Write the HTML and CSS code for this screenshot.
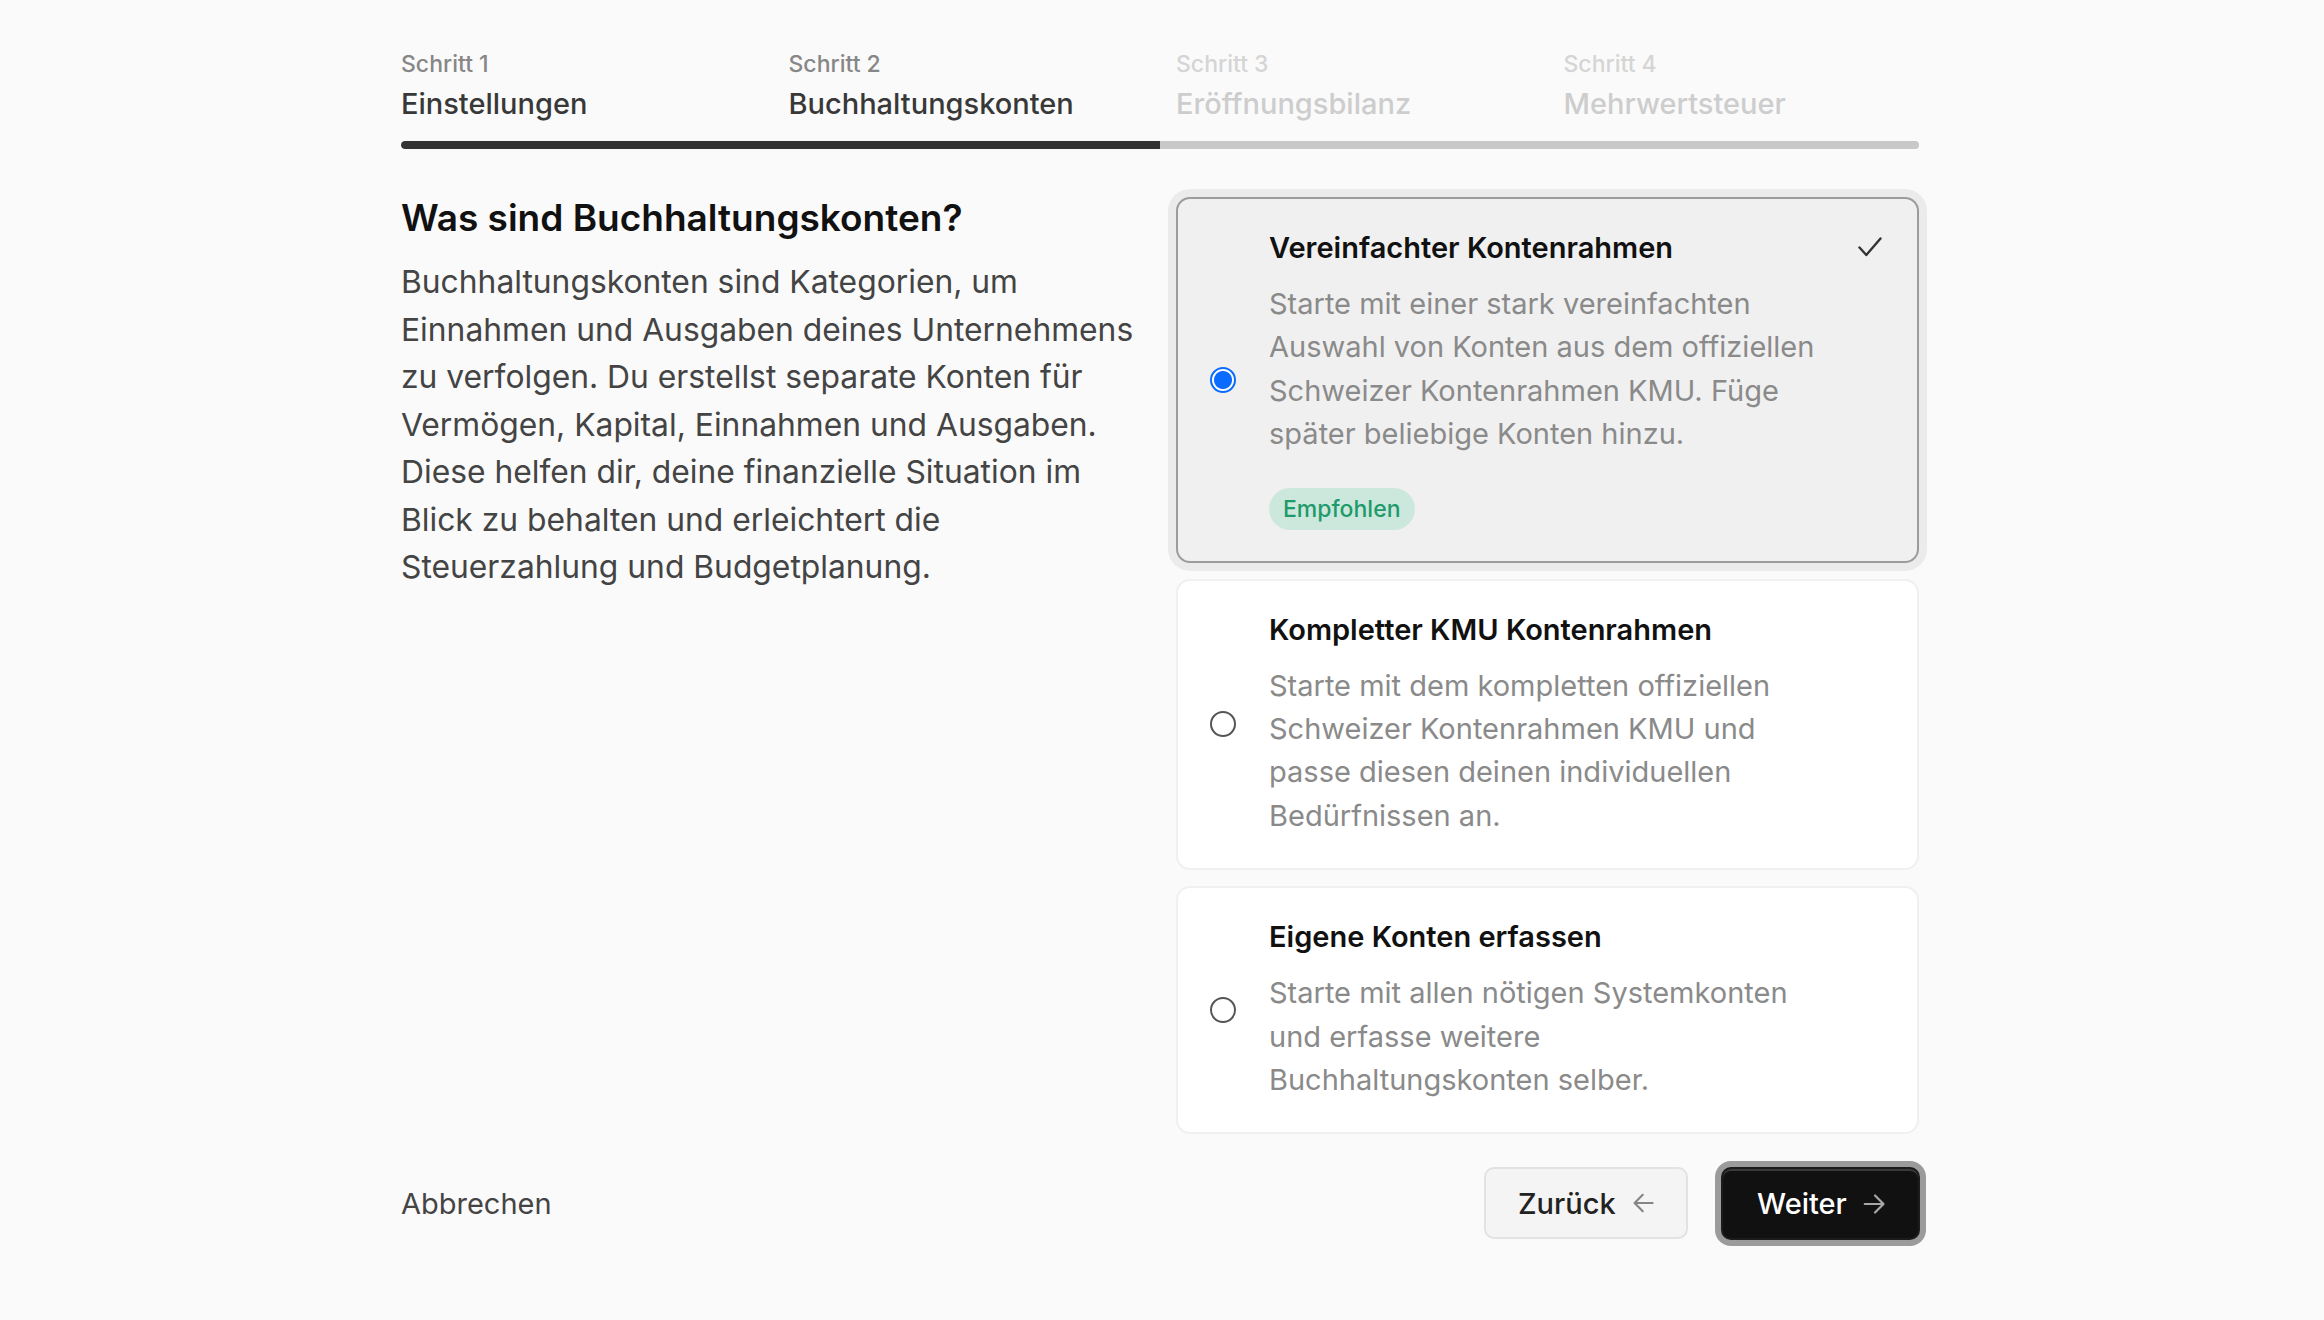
FILE: index.html
```html
<!DOCTYPE html>
<html lang="de">
<head>
<meta charset="utf-8">
<title>Buchhaltungskonten</title>
<link rel="stylesheet" href="styles.css">
</head>
<body>
<div class="page">
  <nav class="steps">
    <div class="step-list">
      <div class="step active"><span class="step-num">Schritt 1</span><span class="step-name">Einstellungen</span></div>
      <div class="step active"><span class="step-num">Schritt 2</span><span class="step-name">Buchhaltungskonten</span></div>
      <div class="step"><span class="step-num">Schritt 3</span><span class="step-name">Eröffnungsbilanz</span></div>
      <div class="step"><span class="step-num">Schritt 4</span><span class="step-name">Mehrwertsteuer</span></div>
    </div>
    <div class="progress"><div class="progress-fill" style="width:50%"></div></div>
  </nav>

  <main class="content">
    <section class="intro">
      <h1>Was sind Buchhaltungskonten?</h1>
      <p>Buchhaltungskonten sind Kategorien, um Einnahmen und Ausgaben deines Unternehmens zu verfolgen. Du erstellst separate Konten für Vermögen, Kapital, Einnahmen und Ausgaben. Diese helfen dir, deine finanzielle Situation im Blick zu behalten und erleichtert die Steuerzahlung und Budgetplanung.</p>
    </section>

    <div class="options">
      <div class="option selected">
        <span class="radio checked"></span>
        <div class="option-body">
          <h2>Vereinfachter Kontenrahmen</h2>
          <p>Starte mit einer stark vereinfachten Auswahl von Konten aus dem offiziellen Schweizer Kontenrahmen KMU. Füge später beliebige Konten hinzu.</p>
          <span class="badge">Empfohlen</span>
        </div>
        <svg class="check" width="24" height="20" viewBox="0 0 24 20" aria-hidden="true"><path d="M1.5 10.5 L8.3 18 L22.5 1.5" fill="none" stroke="#333" stroke-width="2.4" stroke-linecap="round" stroke-linejoin="round"/></svg>
      </div>

      <div class="option">
        <span class="radio"></span>
        <div class="option-body">
          <h2>Kompletter KMU Kontenrahmen</h2>
          <p>Starte mit dem kompletten offiziellen Schweizer Kontenrahmen KMU und passe diesen deinen individuellen Bedürfnissen an.</p>
        </div>
      </div>

      <div class="option">
        <span class="radio"></span>
        <div class="option-body">
          <h2>Eigene Konten erfassen</h2>
          <p>Starte mit allen nötigen Systemkonten und erfasse weitere Buchhaltungskonten selber.</p>
        </div>
      </div>
    </div>
  </main>

  <footer class="actions">
    <a class="cancel">Abbrechen</a>
    <div class="buttons">
      <button class="btn btn-secondary">Zurück
        <svg width="26" height="26" viewBox="0 0 26 26" aria-hidden="true"><path d="M24 13 H3 M12.5 3.5 L3 13 L12.5 22.5" fill="none" stroke="#858585" stroke-width="2.5" stroke-linecap="round" stroke-linejoin="round"/></svg>
      </button>
      <button class="btn btn-primary">Weiter
        <svg width="26" height="26" viewBox="0 0 26 26" aria-hidden="true"><path d="M2 13 H23 M13.5 3.5 L23 13 L13.5 22.5" fill="none" stroke="#a8a8a8" stroke-width="2.5" stroke-linecap="round" stroke-linejoin="round"/></svg>
      </button>
    </div>
  </footer>
</div>
</body>
</html>
```

FILE: styles.css
```css
* { box-sizing: border-box; }

html, body {
  margin: 0;
  padding: 0;
  background: #fafafa;
}

body {
  font-family: "Inter", "Noto Sans", "Liberation Sans", sans-serif;
  color: #222;
}

.page {
  width: 1518px;
  margin-left: 401px;
  padding-top: 49px;
  padding-bottom: 40px;
}

/* Steps */
.step-list {
  display: grid;
  grid-template-columns: repeat(4, 1fr);
  column-gap: 32px;
}

.step {
  display: flex;
  flex-direction: column;
}

.step-num {
  font-size: 23px;
  line-height: 30px;
  font-weight: 500;
  color: #d5d5d5;
  margin-bottom: 7px;
}

.step-name {
  font-size: 29px;
  line-height: 36px;
  font-weight: 500;
  color: #cdcdcd;
}

.step.active .step-num { color: #878787; }
.step.active .step-name { color: #383838; }

.progress {
  margin-top: 19px;
  height: 8px;
  border-radius: 4px;
  background: #c8c8c8;
  overflow: hidden;
}

.progress-fill {
  height: 100%;
  background: #333333;
  border-radius: 4px 0 0 4px;
}

/* Content */
.content {
  margin-top: 48px;
  display: grid;
  grid-template-columns: 1fr 1fr;
  column-gap: 32px;
  align-items: start;
}

.intro h1 {
  margin: 0;
  font-size: 37px;
  line-height: 42px;
  font-weight: 600;
  color: #111;
}

.intro p {
  margin: 19px 0 0;
  font-size: 31.8px;
  line-height: 47.5px;
  color: #444;
}

.options {
  display: flex;
  flex-direction: column;
  gap: 16px;
}

.option {
  display: grid;
  grid-template-columns: 26px 1fr 24px;
  column-gap: 33px;
  align-items: start;
  padding: 31px 35px 31px 32px;
  background: #ffffff;
  border: 2px solid #f0f0f0;
  border-radius: 14px;
}

.option.selected {
  background: #f0f0f0;
  border-color: #9c9c9c;
  box-shadow: 0 0 0 8px #ebebeb;
}

.radio {
  align-self: center;
  width: 26px;
  height: 26px;
  border-radius: 50%;
  border: 2px solid #555;
  background: #fff;
}

.radio.checked {
  border-color: #0a6cff;
  background: radial-gradient(circle, #0a6cff 0 8.5px, #ffffff 9.5px);
}

.option-body h2 {
  margin: 0;
  font-size: 29px;
  line-height: 36px;
  font-weight: 600;
  color: #111;
}

.option-body p {
  margin: 16px 0 0;
  font-size: 29px;
  line-height: 43.4px;
  color: #8a8a8a;
}

.badge {
  display: inline-block;
  margin-top: 32px;
  height: 42px;
  line-height: 42px;
  padding: 0 14px;
  border-radius: 21px;
  background: #cce8dc;
  color: #1f9a6b;
  font-size: 23px;
  font-weight: 500;
}

.check {
  margin-top: 7px;
}

/* Footer */
.actions {
  margin-top: 33px;
  display: flex;
  justify-content: space-between;
  align-items: center;
}

.cancel {
  font-size: 29px;
  line-height: 36px;
  color: #444;
}

.buttons {
  display: flex;
  gap: 33px;
  margin-right: -1px;
}

.btn {
  display: inline-flex;
  align-items: center;
  gap: 16px;
  height: 72px;
  padding: 0 32px;
  font-family: inherit;
  font-size: 29px;
  font-weight: 500;
  border-radius: 10px;
}

.btn-secondary {
  width: 204px;
  background: #f4f4f4;
  border: 2px solid #e2e2e2;
  color: #222;
}

.btn-primary {
  width: 199px;
  height: 73px;
  padding-left: 34px;
  background: #111;
  border: 2px solid #1c1c1c;
  color: #fff;
  box-shadow: inset 0 2px 0 #3a3a3a, 0 0 0 6px #9b9b9b;
}
```
